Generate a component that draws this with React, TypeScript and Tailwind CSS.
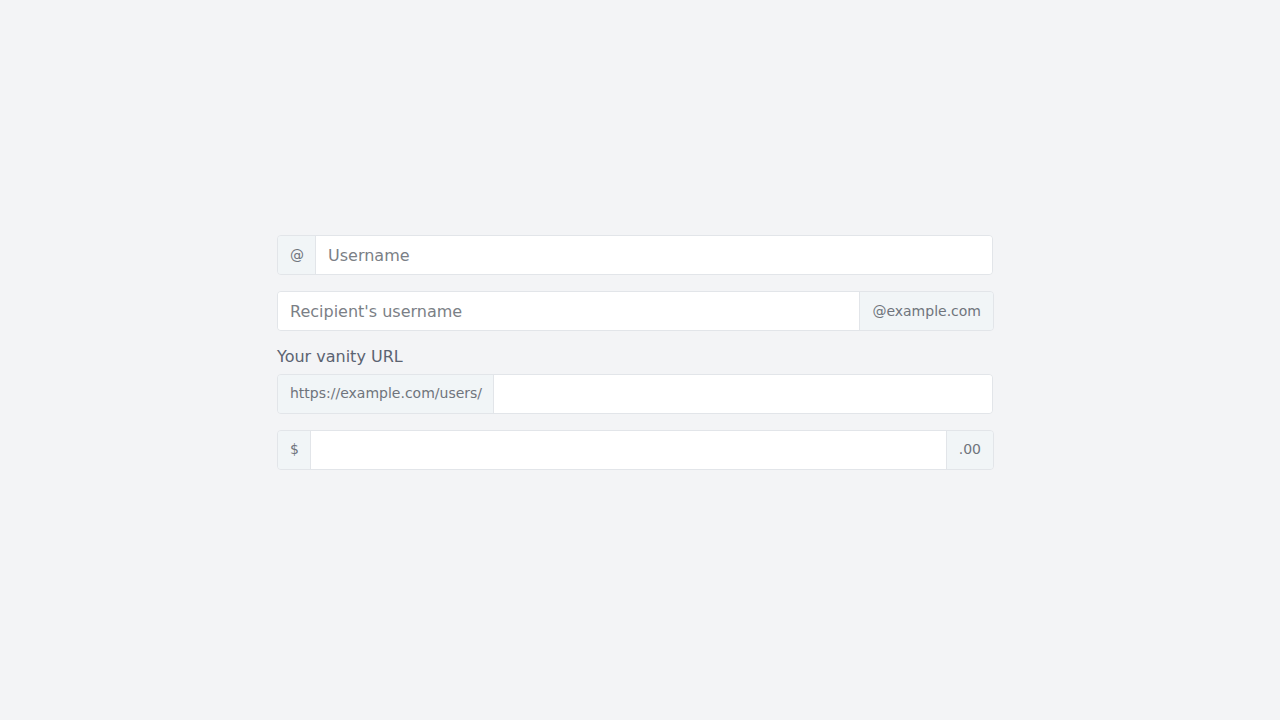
export default function App() {
  const addon =
    "flex items-center bg-[#f1f5f7] text-sm text-[#6f747c] border-[#e2e5e9] whitespace-nowrap"
  const left = `${addon} pl-3 pr-[11px] border-r`
  const right = `${addon} px-3 border-l`
  const input =
    "flex-1 min-w-0 px-3 pt-px bg-white text-base text-[#374151] placeholder:text-[#7b7f86] outline-none"

  return (
    <div className="min-h-[720px] bg-[#f3f4f6] pt-[235px] font-['DejaVu_Sans',sans-serif]">
      <div className="ml-[277px] w-[716px] flex flex-col">
        <div className="flex h-10 rounded border border-[#e2e5e9] overflow-hidden">
          <span className={left}>@</span>
          <input className={input} placeholder="Username" />
        </div>

        <div className="mt-4 flex h-10 w-[717px] rounded border border-[#e2e5e9] overflow-hidden">
          <input className={input} placeholder="Recipient's username" />
          <span className={right}>@example.com</span>
        </div>

        <label className="mt-[14px] mb-[5px] text-base leading-6 text-[#5b6371]">Your vanity URL</label>
        <div className="flex h-10 rounded border border-[#e2e5e9] overflow-hidden">
          <span className={`${left} pb-[2px]`}>https://example.com/users/</span>
          <input className={input} />
        </div>

        <div className="mt-4 flex h-10 w-[717px] rounded border border-[#e2e5e9] overflow-hidden">
          <span className={`${left} pb-[2px]`}>$</span>
          <input className={input} />
          <span className={`${right} pb-[2px]`}>.00</span>
        </div>
      </div>
    </div>
  )
}
